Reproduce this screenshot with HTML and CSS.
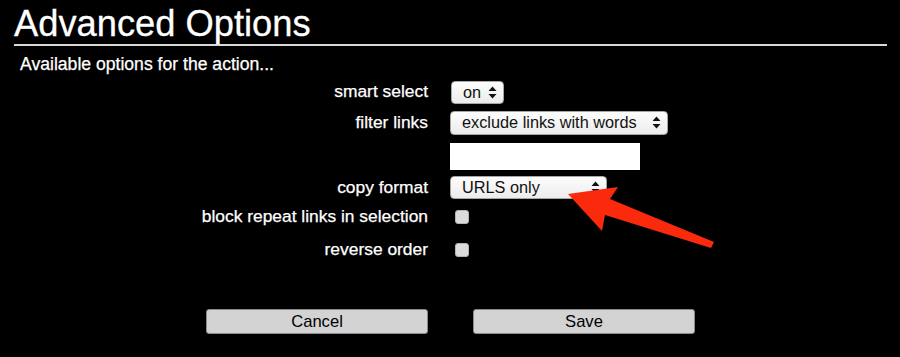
FILE: index.html
```html
<!DOCTYPE html>
<html lang="en">
<head>
  <meta charset="UTF-8">
  <title>Advanced Options</title>
  <link rel="stylesheet" href="styles.css">
</head>
<body>
  <div class="page">
    <h1 class="title">Advanced Options</h1>
    <p class="subtitle">Available options for the action...</p>

    <div class="options">
      <div class="row row-smart">
        <label class="label">smart select</label>
        <span class="select select-on">on
          <svg class="updown" width="9" height="13" viewBox="0 0 9 13"><path d="M4.5 0.5 L8.5 5 L0.5 5 Z M0.5 8 L8.5 8 L4.5 12.5 Z" fill="#111"/></svg>
        </span>
      </div>
      <div class="row row-filter">
        <label class="label">filter links</label>
        <span class="select select-filter">exclude links with words
          <svg class="updown" width="9" height="13" viewBox="0 0 9 13"><path d="M4.5 0.5 L8.5 5 L0.5 5 Z M0.5 8 L8.5 8 L4.5 12.5 Z" fill="#111"/></svg>
        </span>
      </div>
      <div class="row row-words">
        <span class="label"></span>
        <input class="words" type="text">
      </div>
      <div class="row row-format">
        <label class="label">copy format</label>
        <span class="select select-format">URLS only
          <svg class="updown" width="9" height="13" viewBox="0 0 9 13"><path d="M4.5 0.5 L8.5 5 L0.5 5 Z M0.5 8 L8.5 8 L4.5 12.5 Z" fill="#111"/></svg>
        </span>
      </div>
      <div class="row row-block">
        <label class="label">block repeat links in selection</label>
        <span class="check"></span>
      </div>
      <div class="row row-reverse">
        <label class="label">reverse order</label>
        <span class="check"></span>
      </div>
    </div>

    <div class="buttons">
      <button class="btn">Cancel</button>
      <button class="btn">Save</button>
    </div>

    <!-- callout arrow pointing at copy format -->
    <svg class="callout" width="900" height="357" viewBox="0 0 900 357">
      <path d="M568 194 L618 187 L610 199 L714 242 L711 248 L605 215 L602 231 Z" fill="#fc2a0c"/>
    </svg>
  </div>
</body>
</html>
```

FILE: styles.css
```css
* {
  box-sizing: border-box;
}

body {
  margin: 0;
  background: #000;
  color: #fff;
  font-family: 'Liberation Sans', Arial, sans-serif;
}

.page {
  position: relative;
  width: 900px;
  height: 357px;
  overflow: hidden;
}

.title {
  margin: 0 13px 0 14px;
  padding-top: 4px;
  height: 46px;
  font-size: 36.3px;
  font-weight: normal;
  line-height: 40px;
  border-bottom: 2px solid #d8d8d8;
  -webkit-text-stroke: 0.3px #fff;
}

.subtitle {
  margin: 8px 0 0 20px;
  font-size: 17.6px;
  line-height: 20px;
  -webkit-text-stroke: 0.25px #fff;
}

.options {
  margin-top: 6px;
}

.row {
  display: flex;
  align-items: center;
}

.label {
  width: 428px;
  padding-bottom: 2px;
  text-align: right;
  font-size: 17.4px;
  line-height: 20px;
  flex-shrink: 0;
  -webkit-text-stroke: 0.25px #fff;
}

.row-smart { height: 24px; }
.row-filter { height: 26px; margin-top: 6px; }
.row-words { height: 27px; margin-top: 7px; }
.row-format { height: 25px; margin-top: 5px; }
.row-block { height: 24px; margin-top: 5px; }
.row-reverse { height: 24px; margin-top: 9px; }

.select {
  position: relative;
  display: inline-block;
  height: 23px;
  margin-left: 22px;
  padding: 0 24px 0 11px;
  background: linear-gradient(#fdfdfd, #ececec);
  border: 1px solid #a6a6a6;
  border-radius: 4px;
  color: #111;
  font-size: 16.3px;
  line-height: 21px;
}

.select-on { margin-left: 23px; width: 53px; }
.select-filter { width: 218px; height: 24px; }
.select-format { width: 157px; }

.updown {
  position: absolute;
  right: 6px;
  top: 4px;
}

.words {
  margin-left: 22px;
  width: 190px;
  height: 27px;
  border: none;
  background: #fff;
}

.check {
  display: inline-block;
  width: 14px;
  height: 14px;
  margin-left: 27px;
  background: #dcdcdc;
  border: 1px solid #b4b4b4;
  border-radius: 3px;
}

.buttons {
  display: flex;
  justify-content: center;
  gap: 45px;
  margin-top: 47px;
  padding-left: 1px;
}

.btn {
  width: 222px;
  height: 25px;
  padding: 0;
  background: #d3d3d3;
  border: 1px solid #8a8a8a;
  border-radius: 3px;
  color: #000;
  font-family: 'Liberation Sans', Arial, sans-serif;
  font-size: 16.6px;
}

.callout {
  position: absolute;
  left: 0;
  top: 0;
  pointer-events: none;
}
```
